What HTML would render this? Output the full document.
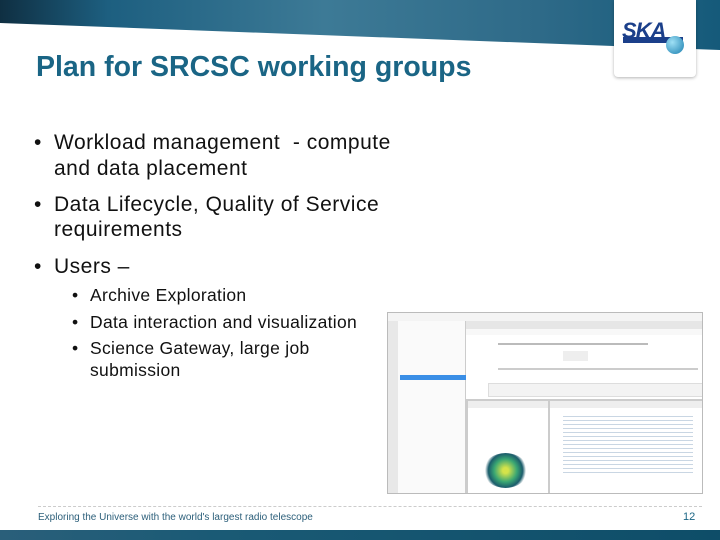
<!DOCTYPE html>
<html><head><meta charset="utf-8"><style>
*{margin:0;padding:0;box-sizing:border-box}
body{width:720px;height:540px;position:relative;overflow:hidden;background:#fff;font-family:"Liberation Sans",sans-serif}
.t{position:absolute;white-space:nowrap;color:#111}
.b{font-size:21px;letter-spacing:0.5px}
.s{font-size:17.5px;letter-spacing:0.3px}
.m{position:absolute;background:#ddd}
</style></head><body>
<svg style="position:absolute;left:0;top:0" width="720" height="80">
<defs><linearGradient id="g" x1="0" x2="1"><stop offset="0" stop-color="#0f2f42"/><stop offset="0.15" stop-color="#1d5f80"/><stop offset="0.45" stop-color="#3d7a96"/><stop offset="0.75" stop-color="#2e6a88"/><stop offset="1" stop-color="#155a7a"/></linearGradient></defs>
<polygon points="0,0 720,0 720,50 0,23" fill="url(#g)"/>
</svg>
<div style="position:absolute;left:614px;top:0;width:82px;height:77px;background:#fff;border-radius:0 0 4px 4px;box-shadow:0 1px 3px rgba(0,0,0,.3)"></div>
<div style="position:absolute;left:623px;top:37px;width:60px;height:6px;background:#1b3f8a"></div>
<div class="t" style="left:622px;top:18px;font:bold italic 22px 'Liberation Sans',sans-serif;color:#1b3f8a;letter-spacing:-1px">SKA</div>
<div style="position:absolute;left:666px;top:36px;width:18px;height:18px;border-radius:50%;background:radial-gradient(circle at 35% 35%,#9fe0f5,#1a7fb0)"></div>
<div class="t" style="left:36px;top:51px;font-size:28.5px;font-weight:bold;color:#1a6585">Plan for SRCSC working groups</div>
<div class="t b" style="left:34px;top:131px">•</div><div class="t b" style="left:54px;top:131px">Workload management &nbsp;- compute</div>
<div class="t b" style="left:54px;top:157px">and data placement</div>
<div class="t b" style="left:34px;top:193px">•</div><div class="t b" style="left:54px;top:193px">Data Lifecycle, Quality of Service</div>
<div class="t b" style="left:54px;top:218px">requirements</div>
<div class="t b" style="left:34px;top:255px">•</div><div class="t b" style="left:54px;top:255px">Users –</div>
<div class="t s" style="left:72px;top:285px">•</div><div class="t s" style="left:90px;top:285px">Archive Exploration</div>
<div class="t s" style="left:72px;top:312px">•</div><div class="t s" style="left:90px;top:312px">Data interaction and visualization</div>
<div class="t s" style="left:72px;top:338px">•</div><div class="t s" style="left:90px;top:338px">Science Gateway, large job</div>
<div class="t s" style="left:90px;top:360px">submission</div>
<div style="position:absolute;left:387px;top:312px;width:316px;height:182px;background:#fff;border:1px solid #bbb;overflow:hidden">
<div class="m" style="left:0;top:0;width:316px;height:8px;background:#f4f4f4"></div>
<div class="m" style="left:0;top:8px;width:10px;height:174px;background:#e8e8e8"></div>
<div class="m" style="left:10px;top:8px;width:68px;height:174px;background:#fafafa;border-right:1px solid #ccc"></div>
<div class="m" style="left:12px;top:62px;width:66px;height:5px;background:#3a8ee6"></div>
<div class="m" style="left:78px;top:8px;width:238px;height:8px;background:#e6e6e6"></div>
<div class="m" style="left:78px;top:16px;width:238px;height:6px;background:#f8f8f8"></div>
<div class="m" style="left:110px;top:30px;width:150px;height:2px;background:#bbb"></div>
<div class="m" style="left:175px;top:38px;width:25px;height:10px;background:#eee"></div>
<div class="m" style="left:110px;top:55px;width:200px;height:2px;background:#ccc"></div>
<div class="m" style="left:100px;top:70px;width:215px;height:14px;background:#f3f3f3;border:1px solid #ddd"></div>
<div class="m" style="left:78px;top:86px;width:238px;height:96px;background:#ccc"></div>
<div class="m" style="left:80px;top:88px;width:80px;height:94px;background:#fff"></div>
<div class="m" style="left:162px;top:88px;width:154px;height:94px;background:#fff"></div>
<div class="m" style="left:80px;top:88px;width:80px;height:7px;background:#eee"></div>
<div class="m" style="left:162px;top:88px;width:154px;height:7px;background:#eee"></div>
<div style="position:absolute;left:95px;top:140px;width:45px;height:35px;border-radius:50%;background:radial-gradient(circle,#d4e34a 10%,#3aa673 40%,#1b5c6b 60%,#fff 72%)"></div>
<div class="m" style="left:175px;top:100px;width:130px;height:60px;background:repeating-linear-gradient(#fff 0 3px,#c9d6e3 3px 4px)"></div>
</div>
<div style="position:absolute;left:38px;top:506px;width:664px;border-top:1px dashed #ccc"></div>
<div class="t" style="left:38px;top:512px;font-size:10px;color:#2c5f7a">Exploring the Universe with the world's largest radio telescope</div>
<div class="t" style="left:683px;top:511px;font-size:11px;color:#1a6585">12</div>
<div style="position:absolute;left:0;top:530px;width:720px;height:10px;background:linear-gradient(90deg,#2a5f7a,#1a5a75 30%,#0e4d68)"></div>
</body></html>
